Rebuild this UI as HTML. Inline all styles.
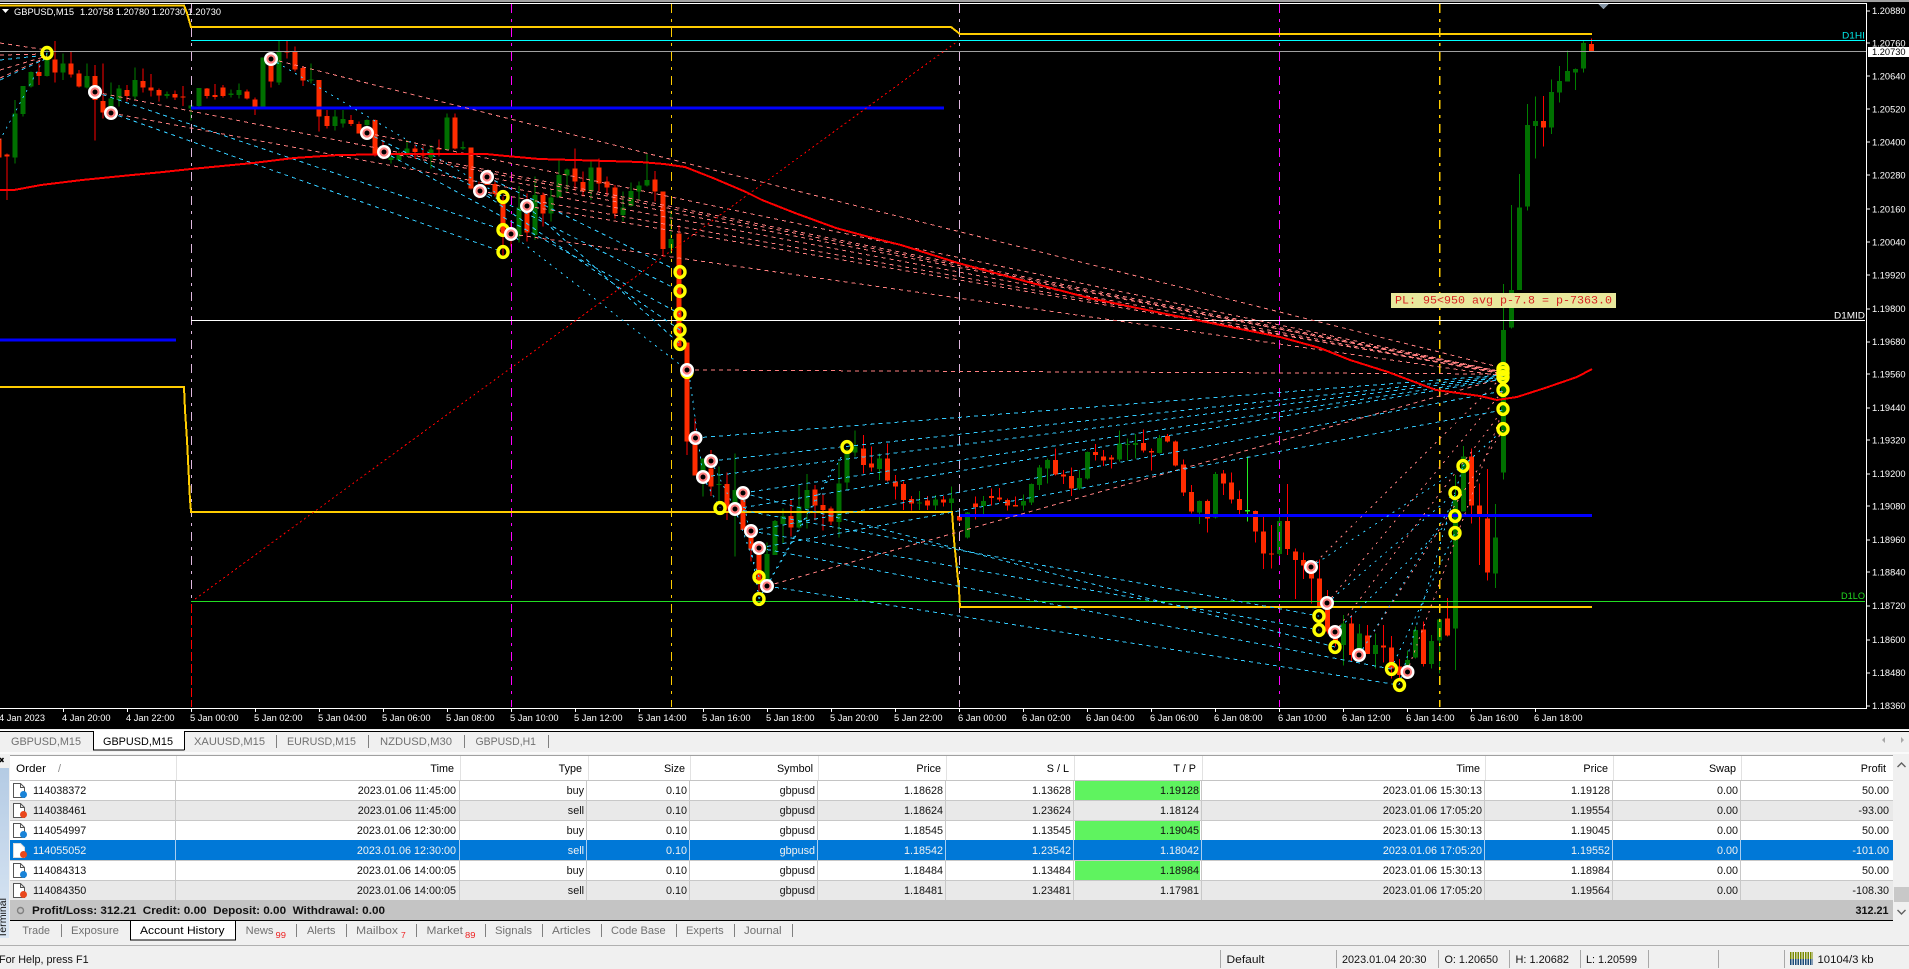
<!DOCTYPE html>
<html><head><meta charset="utf-8"><title>GBPUSD,M15</title>
<style>
html,body{margin:0;padding:0;background:#000;overflow:hidden}
svg{display:block;font-family:"Liberation Sans",sans-serif}
.c{fill:#fff;font-size:9.3px}
.t{font-size:10.8px;fill:#111}
.e{text-anchor:end}
.s{fill:#f2f2f2}
.g{font-size:10.8px;fill:#707070}
.k{font-size:10.8px;fill:#000}
.r{font-size:8.5px;fill:#ee2020}
.l{stroke:#c8c8c8;stroke-width:1}
</style></head><body>
<svg xmlns="http://www.w3.org/2000/svg" width="1909" height="969" viewBox="0 0 1909 969">
<rect width="1909" height="969" fill="#000"/>
<rect width="1909" height="2" fill="#a0a0a0"/>
<g shape-rendering="crispEdges">
<path d="M0 3.5H1866.5V708.5H0" fill="none" stroke="#fff"/>
<!-- candles upper -->
<g transform="translate(191 0) scale(8.003 .33333)" fill="none">
<path vector-effect="non-scaling-stroke" stroke="#ff0000" stroke-width="1" d="M-23 460V600M-19 190V255M-17 123V248M-15 155V232M-14 210V262M-12 195V422M-11 190V355M-8 255V305M-6 205V278M-5 222V290M-4 265V305M-2 272V300M-1 258V318M2 264V296M3 252V298M4 255V292M7 268V298M8 292V345M10 160V262M12 120V175M13 140V215M14 198V258M16 240V395M17 330V385M20 345V378M21 365V400M23 358V470M24 418V478M28 435V475M29 440V475M31 418V470M33 340V448M35 442V568M36 545V595M37 510V555M38 540V590M39 590V770M40 660V740M42 580V725M44 578V680M48 445V572M49 515V590M51 475V575M52 530V590M53 555V655M58 513V605M59 575V770M61 675V1000M169 288V440M175 115V155"/>
<path vector-effect="non-scaling-stroke" stroke="#008000" stroke-width="1" d="M-22 300V490M-21 258V350M-20 215V262M-18 140V230M-16 160V240M-13 190V265M-10 248V320M-9 255V320M-7 202V300M-3 275V295M0 315V362M1 264V320M5 268V292M6 250V295M9 173V322M11 120V255M15 190V250M18 330V392M19 330V382M22 358V380M25 470V490M26 455V485M27 420V470M30 435V505M32 340V450M34 425V450M41 558V728M43 530V720M45 570V665M46 480V590M47 505V575M50 485V600M54 575V665M55 548V620M56 545V600M57 462V560M60 632V760M164 852V1080M165 615V985M166 522V870M167 312V632M168 290V475M170 238V402M171 198V308M172 152V245M173 205V270M174 122V218"/>
<path vector-effect="non-scaling-stroke" stroke="#ff2c00" stroke-width="5" d="M-24 415V473M-23 464V470M-19 216V228M-17 178V218M-15 190V224M-14 220V260M-12 228V300M-11 303V338M-8 270V288M-6 243V262M-5 262V272M-4 270V287M-2 282V293M-1 289V293M2 265V288M3 285V291M4 262V288M7 274V296M8 298V322M10 180V245M12 154V158M13 155V208M14 204V242M16 240V350M17 348V378M20 360V372M21 372V400M23 360V460M24 440V475M28 445V456M29 460V466M31 444V448M33 352V445M35 442V566M36 560V590M37 510V555M38 552V582M39 600V700M40 685V720M42 630V698M44 585V640M48 505V545M49 546V575M51 502V550M52 545V562M53 562V640M58 538V575M59 575V747M61 700V1040M169 363V382M175 132V154"/>
<path vector-effect="non-scaling-stroke" stroke="#007000" stroke-width="5" d="M-22 340V473M-21 258V342M-20 216V260M-18 175V228M-16 190V218M-13 228V262M-10 296V320M-9 266V300M-7 240V290M-3 282V288M0 316V326M1 264V318M5 280V285M6 270V285M9 173V322M11 155V248M15 238V242M18 350V378M19 357V370M22 360V375M25 473V480M26 462V480M27 445V460M30 448V472M32 352V448M34 441V446M41 622V710M43 585V705M45 592V640M46 525V592M47 508V527M50 502V575M54 622V645M55 573V618M56 556V575M57 540V557M60 717V744M164 990V1080M165 870V983M166 622V870M167 375V620M168 363V378M170 276V383M171 243V278M172 213V245M173 207V218M174 129V206"/>
</g>
<!-- candles lower -->
<g transform="translate(191 360) scale(8.003 .33333)" fill="none">
<path vector-effect="non-scaling-stroke" stroke="#ff0000" stroke-width="1" d="M62 -53V285M63 175V345M65 270V408M67 338V480M69 395V510M70 500V605M71 560V695M75 418V530M78 375V482M79 402V512M80 440V495M84 225V340M85 260V335M87 250V365M88 345V418M89 365V450M90 408V452M92 408V450M94 408V440M96 465V485M98 410V478M100 385V436M101 384V425M102 415V452M103 410V440M108 265V347M109 330V372M110 322V408M113 252V302M114 270V318M115 285V325M119 208V277M120 265V332M122 222V248M123 242V320M124 298V408M125 375V460M127 418V518M129 330V405M130 338V430M131 392V462M133 452V548M134 470V627M135 495V625M137 372V585M138 565V717M139 577V657M140 610V730M141 598V740M142 690V820M143 795V860M145 765V905M147 795V880M149 795V908M150 828V955M151 897V960M154 785V920M157 714V830M160 265V490M161 370V615M162 327V662"/>
<path vector-effect="non-scaling-stroke" stroke="#008000" stroke-width="1" d="M64 295V410M66 320V430M68 280V590M72 548V670M73 480V585M74 445V550M76 375V505M77 342V505M81 305V532M82 265V390M83 212V290M86 280V360M91 393V450M93 405V450M95 380V455M97 456V535M99 408V462M104 403V452M105 370V435M106 315V390M107 295V370M111 330V390M112 275V358M116 212V305M117 235V302M118 222V295M121 225V280M126 422V492M128 336V475M136 455V590M144 765V917M146 792V870M148 820V925M152 872V920M153 800V895M155 825V925M156 775V940M158 345V930M159 258V455M163 432V684M164 0V358"/>
<path vector-effect="non-scaling-stroke" stroke="#ff2c00" stroke-width="5" d="M62 -53V245M63 250V347M65 325V380M67 372V445M69 420V510M70 500V570M71 570V665M75 468V502M78 388V437M79 435V450M80 445V485M84 265V315M85 310V323M87 295V362M88 365V380M89 372V420M90 417V430M92 421V437M94 418V428M96 468V482M98 431V441M100 408V414M101 412V419M102 420V436M103 435V439M108 300V344M109 343V350M110 348V386M113 276V285M114 289V302M115 293V299M119 249V272M120 273V277M122 228V245M123 244V317M124 313V398M125 396V455M127 423V475M129 340V370M130 367V418M131 417V450M133 453V515M134 514V580M135 580V584M137 483V567M138 574V600M139 600V616M140 620V656M141 655V740M142 720V815M143 810V845M145 790V885M147 826V882M149 856V862M150 862V925M151 920V945M154 808V912M157 775V827M160 290V436M161 436V465M162 475V638"/>
<path vector-effect="non-scaling-stroke" stroke="#007000" stroke-width="5" d="M64 295V360M66 372V375M68 390V440M72 582V665M73 483V585M74 468V492M76 440V502M77 390V445M81 370V486M82 280V368M83 260V278M86 295V327M91 427V431M93 418V437M95 415V429M97 458V533M99 423V438M104 423V437M105 372V428M106 323V375M107 300V326M111 354V385M112 276V356M116 250V298M117 252V255M118 249V255M121 234V279M126 423V457M128 342V472M136 483V582M144 790V855M146 820V870M148 855V882M152 900V920M153 810V893M155 843V912M156 778V842M158 420V805M159 290V455M163 532V640M164 0V338"/>
<path vector-effect="non-scaling-stroke" stroke="#22ee22" stroke-width="1" d="M132 290V485"/>
<path vector-effect="non-scaling-stroke" stroke="#22ee22" stroke-width="5" d="M132 450V454"/>
</g>
<!-- vertical lines -->
<g fill="none" stroke-width="1" stroke-dasharray="9 6 3 6">
<path stroke="#e0b8e0" d="M191.5 4V602M959.5 4V707"/>
<path stroke="#ff00ff" d="M511.5 4V707M1279.5 4V707"/>
<path stroke="#ffcc00" d="M671.5 4V707"/>
<path stroke="#ffcc00" d="M1439.5 4V707" stroke-width="1.5"/>
</g>
<path stroke="#ff0000" fill="none" stroke-dasharray="9 3" d="M191.5 604V707"/>
<!-- horizontals -->
<path d="M191 40.5H1865" stroke="#00ffff" fill="none"/>
<path d="M0 51.5H1866" stroke="#a0a0a0" fill="none"/>
<path d="M191 320.5H1865" stroke="#fff" fill="none"/>
<path d="M191 601.5H1865" stroke="#22dd22" fill="none"/>
<path d="M191 108H944M0 340H176M960 515.5H1592" stroke="#0000ff" stroke-width="3" fill="none"/>
<path d="M0 5.5H184L187 13L191 27H951L960 34H1592M0 387H184L185 410L187 440L189 480L190 500L191 512H952L954 540L957 570L959 590L960 607H1592" stroke="#ffcc00" stroke-width="2" fill="none"/>
<!-- dashed -->
<path fill="none" stroke="#ff8080" stroke-dasharray="4 4" d="M95 92L1503 372M111 113L1503 374M271 59L1503 368M367 133L1503 372M384 152L1503 373M487 177L1503 372M480 191L1503 374M527 206L1503 373M511 234L1503 376M687 370L1503 374M767 586L1503 378M0 43L47 50M0 55L47 54M0 70L47 56M0 78L47 57"/>
<path fill="none" stroke="#ff8080" stroke-dasharray="2 5" d="M1311 567L1503 376M1327 603L1503 391M1335 632L1503 410M1359 655L1503 430M1407 672L1503 410"/>
<path fill="none" stroke="#33ccff" stroke-dasharray="4 4" d="M0 60L47 55M0 80L47 58M95 92L503 230M111 113L503 252M367 133L680 291M384 152L680 314M487 177L680 272M480 191L680 330M527 206L680 344M695 438L1503 375M711 461L1503 376M703 477L1503 377M743 493L1503 378M735 509L1503 379M751 531L1503 391M759 548L1503 410M735 509L1319 616M751 531L1319 630M743 493L1335 647M759 548L1391 669M767 586L1399 685"/>
<path fill="none" stroke="#33ccff" stroke-dasharray="2 5" d="M47 53L0 140M271 59L503 197M511 234L687 370M690 380L703 477M703 477L720 508M735 509L759 577M711 461L735 509M743 493L759 599M767 586L847 447M759 599L835 465M1311 567L1463 466M1327 603L1455 493M1335 632L1455 516M1391 669L1455 533M1399 685L1463 466M1359 655L1455 500M1463 466L1503 430"/>
<path fill="none" stroke="#ff0000" stroke-dasharray="2 3" d="M195 599L958 41"/>
<!-- MA -->
<path fill="none" stroke="#ff0000" stroke-width="2" d="M0 190L14 190L41 185L82 180L122 176L163 172L191 169L253 163L294 158L339 155L408 154L486 154L506 156L539 159L608 161L640 162L664 164L685 167L713 178L746 192L762 200L795 213L836 228L869 237L901 245L958 263L1032 283L1089 298L1171 315L1280 337L1320 348L1350 360L1388 372L1436 390L1480 396L1497 400L1517 397L1545 388L1577 377L1592 369"/>
</g>
<!-- yellow rings -->
<g fill="none" stroke="#ffff00" stroke-width="3.4">
<ellipse cx="47" cy="53" rx="5" ry="5.5"/><ellipse cx="503" cy="197" rx="5" ry="5.4"/><ellipse cx="503" cy="230" rx="5" ry="5.4"/><ellipse cx="503" cy="252" rx="5" ry="5.4"/>
<ellipse cx="680" cy="272" rx="5" ry="5.4"/><ellipse cx="680" cy="291" rx="5" ry="5.4"/><ellipse cx="680" cy="314" rx="5" ry="5.4"/><ellipse cx="680" cy="330" rx="5" ry="5.4"/><ellipse cx="680" cy="344" rx="5" ry="5.4"/>
<ellipse cx="687" cy="372" rx="5" ry="5.4"/><ellipse cx="720" cy="508" rx="5" ry="5.4"/><ellipse cx="759" cy="577" rx="5" ry="5.4"/><ellipse cx="759" cy="599" rx="5" ry="5.4"/><ellipse cx="847" cy="447" rx="5" ry="5.4"/>
<ellipse cx="1319" cy="616" rx="5" ry="5.4"/><ellipse cx="1319" cy="630" rx="5" ry="5.4"/><ellipse cx="1335" cy="647" rx="5" ry="5.4"/><ellipse cx="1391.5" cy="669" rx="5" ry="5.4"/><ellipse cx="1399.5" cy="685" rx="5" ry="5.4"/>
<ellipse cx="1455" cy="493" rx="5" ry="5.4"/><ellipse cx="1455" cy="516" rx="5" ry="5.4"/><ellipse cx="1455" cy="533" rx="5" ry="5.4"/><ellipse cx="1463" cy="466" rx="5" ry="5.4"/>
<ellipse cx="1503" cy="369" rx="5" ry="5.4"/><ellipse cx="1503" cy="373" rx="5" ry="5.4"/><ellipse cx="1503" cy="377" rx="5" ry="5.4"/><ellipse cx="1503" cy="390" rx="5" ry="5.4"/><ellipse cx="1503" cy="409" rx="5" ry="5.4"/><ellipse cx="1503" cy="429" rx="5" ry="5.4"/>
</g>
<!-- white/pink rings -->
<g fill="#ff8080" stroke="#fff" stroke-width="2.4">
<circle cx="95" cy="92" r="5.8"/><circle cx="111" cy="113" r="5.8"/><circle cx="271" cy="59" r="5.8"/><circle cx="367" cy="133" r="5.8"/><circle cx="384" cy="152" r="5.8"/><circle cx="487" cy="177" r="5.8"/><circle cx="480" cy="191" r="5.8"/><circle cx="527" cy="206" r="5.8"/><circle cx="511" cy="234" r="5.8"/>
<circle cx="687" cy="370" r="5.8"/><circle cx="695.5" cy="438" r="5.8"/><circle cx="711" cy="461" r="5.8"/><circle cx="703" cy="477" r="5.8"/><circle cx="743" cy="493" r="5.8"/><circle cx="735" cy="509" r="5.8"/><circle cx="751" cy="531" r="5.8"/><circle cx="759" cy="548" r="5.8"/><circle cx="767" cy="586" r="5.8"/>
<circle cx="1311" cy="567" r="5.8"/><circle cx="1327" cy="603" r="5.8"/><circle cx="1335" cy="632" r="5.8"/><circle cx="1359" cy="655" r="5.8"/><circle cx="1407.5" cy="672" r="5.8"/>
</g>
<g fill="#000">
<circle cx="95" cy="92" r="2.5"/><circle cx="111" cy="113" r="2.5"/><circle cx="271" cy="59" r="2.5"/><circle cx="367" cy="133" r="2.5"/><circle cx="384" cy="152" r="2.5"/><circle cx="487" cy="177" r="2.5"/><circle cx="480" cy="191" r="2.5"/><circle cx="527" cy="206" r="2.5"/><circle cx="511" cy="234" r="2.5"/>
<circle cx="687" cy="370" r="2.5"/><circle cx="695.5" cy="438" r="2.5"/><circle cx="711" cy="461" r="2.5"/><circle cx="703" cy="477" r="2.5"/><circle cx="743" cy="493" r="2.5"/><circle cx="735" cy="509" r="2.5"/><circle cx="751" cy="531" r="2.5"/><circle cx="759" cy="548" r="2.5"/><circle cx="767" cy="586" r="2.5"/>
<circle cx="1311" cy="567" r="2.5"/><circle cx="1327" cy="603" r="2.5"/><circle cx="1335" cy="632" r="2.5"/><circle cx="1359" cy="655" r="2.5"/><circle cx="1407.5" cy="672" r="2.5"/>
</g>
<g shape-rendering="crispEdges">
<!-- right axis ticks, bottom ticks -->
<path fill="none" stroke="#fff" d="M1866 11H1870M1866 43H1870M1866 76H1870M1866 109H1870M1866 142H1870M1866 175H1870M1866 209H1870M1866 242H1870M1866 275H1870M1866 309H1870M1866 342H1870M1866 374H1870M1866 408H1870M1866 440H1870M1866 474H1870M1866 506H1870M1866 540H1870M1866 572H1870M1866 606H1870M1866 640H1870M1866 673H1870M1866 706H1870M63.5 708V712M127.5 708V712M191.5 708V712M255.5 708V712M319.5 708V712M383.5 708V712M447.5 708V712M511.5 708V712M575.5 708V712M639.5 708V712M703.5 708V712M767.5 708V712M831.5 708V712M895.5 708V712M959.5 708V712M1023.5 708V712M1087.5 708V712M1151.5 708V712M1215.5 708V712M1279.5 708V712M1343.5 708V712M1407.5 708V712M1471.5 708V712M1535.5 708V712"/>
<path d="M1598 4H1609L1603.5 9Z" fill="#8898a8"/>
<rect x="1868" y="47" width="41" height="10" fill="#fff"/>
<rect x="1391" y="293" width="225" height="15" fill="#e8e89c"/>
</g>
<!-- chart text -->
<path d="M2 9H9L5.5 13Z" fill="#fff"/>
<text class="c" x="14" y="15" textLength="60" lengthAdjust="spacingAndGlyphs">GBPUSD,M15</text>
<text class="c" x="80" y="15" textLength="141" lengthAdjust="spacingAndGlyphs">1.20758 1.20780 1.20730 1.20730</text>
<g class="c">
<text class="c" x="1872" y="14">1.20880</text><text class="c" x="1872" y="46.5">1.20760</text><text class="c" x="1872" y="79.5">1.20640</text><text class="c" x="1872" y="112.5">1.20520</text><text class="c" x="1872" y="145.5">1.20400</text><text class="c" x="1872" y="178.5">1.20280</text><text class="c" x="1872" y="212.5">1.20160</text><text class="c" x="1872" y="245.5">1.20040</text><text class="c" x="1872" y="278.5">1.19920</text><text class="c" x="1872" y="312">1.19800</text><text class="c" x="1872" y="345">1.19680</text><text class="c" x="1872" y="377.5">1.19560</text><text class="c" x="1872" y="411">1.19440</text><text class="c" x="1872" y="443.5">1.19320</text><text class="c" x="1872" y="477">1.19200</text><text class="c" x="1872" y="509.5">1.19080</text><text class="c" x="1872" y="543">1.18960</text><text class="c" x="1872" y="575.5">1.18840</text><text class="c" x="1872" y="609">1.18720</text><text class="c" x="1872" y="643">1.18600</text><text class="c" x="1872" y="676">1.18480</text><text class="c" x="1872" y="709">1.18360</text>
</g>
<text x="1872" y="55" style="font-size:9.3px;fill:#000">1.20730</text>
<text x="1842" y="38.5" textLength="23" lengthAdjust="spacingAndGlyphs" style="font-size:9.5px;fill:#00e8e8">D1HI</text>
<text x="1834" y="318.5" textLength="31" lengthAdjust="spacingAndGlyphs" style="font-size:9.5px;fill:#fff">D1MID</text>
<text x="1841" y="599" textLength="24" lengthAdjust="spacingAndGlyphs" style="font-size:9.5px;fill:#22dd22">D1LO</text>
<text x="1395" y="303.5" textLength="217" lengthAdjust="spacingAndGlyphs" style="font-family:'Liberation Mono',monospace;font-size:11px;fill:#d62020">PL: 95&lt;950 avg p-7.8 = p-7363.0</text>
<g>
<text class="c" x="-1" y="721">4 Jan 2023</text><text class="c" x="62" y="721">4 Jan 20:00</text><text class="c" x="126" y="721">4 Jan 22:00</text><text class="c" x="190" y="721">5 Jan 00:00</text><text class="c" x="254" y="721">5 Jan 02:00</text><text class="c" x="318" y="721">5 Jan 04:00</text><text class="c" x="382" y="721">5 Jan 06:00</text><text class="c" x="446" y="721">5 Jan 08:00</text><text class="c" x="510" y="721">5 Jan 10:00</text><text class="c" x="574" y="721">5 Jan 12:00</text><text class="c" x="638" y="721">5 Jan 14:00</text><text class="c" x="702" y="721">5 Jan 16:00</text><text class="c" x="766" y="721">5 Jan 18:00</text><text class="c" x="830" y="721">5 Jan 20:00</text><text class="c" x="894" y="721">5 Jan 22:00</text><text class="c" x="958" y="721">6 Jan 00:00</text><text class="c" x="1022" y="721">6 Jan 02:00</text><text class="c" x="1086" y="721">6 Jan 04:00</text><text class="c" x="1150" y="721">6 Jan 06:00</text><text class="c" x="1214" y="721">6 Jan 08:00</text><text class="c" x="1278" y="721">6 Jan 10:00</text><text class="c" x="1342" y="721">6 Jan 12:00</text><text class="c" x="1406" y="721">6 Jan 14:00</text><text class="c" x="1470" y="721">6 Jan 16:00</text><text class="c" x="1534" y="721">6 Jan 18:00</text>
</g>
<!-- lower panels -->
<g shape-rendering="crispEdges">
<rect y="729" width="1909" height="240" fill="#f0f0f0"/>
<rect y="730" width="1909" height="1" fill="#fff"/>
<rect y="731" width="1909" height="1" fill="#000"/>
<rect y="752" width="1909" height="2" fill="#fafafa"/>
<!-- chart tabs -->
<rect x="93" y="731" width="91" height="19" fill="#fff"/>
<path d="M93.5 731V750H184.5M184.5 750V731" fill="none" stroke="#000"/>
<path d="M276.5 735V748M368.5 735V748M464.5 735V748M548.5 735V748" stroke="#808080"/>
<!-- table -->
<rect x="10" y="755" width="1883" height="165" fill="#fff"/>
<rect x="10" y="755" width="1883" height="1" fill="#a0a0a0"/>
<rect x="10" y="780" width="1883" height="1" fill="#c4c4c4"/>
<rect x="10" y="800" width="1883" height="20" fill="#e9e9e9"/>
<rect x="10" y="840" width="1883" height="20" fill="#0078d7"/>
<rect x="10" y="880" width="1883" height="20" fill="#e9e9e9"/>
<rect x="1075" y="781" width="125" height="19" fill="#5ff35f"/>
<rect x="1075" y="821" width="125" height="19" fill="#5ff35f"/>
<rect x="1075" y="861" width="125" height="19" fill="#5ff35f"/>
<path class="l" d="M10 800.5H1893M10 820.5H1893M10 860.5H1893M10 880.5H1893" fill="none"/>
<path d="M176.5 756V780M460.5 756V780M588.5 756V780M690.5 756V780M818.5 756V780M946.5 756V780M1074.5 756V780M1202.5 756V780M1485.5 756V780M1613.5 756V780M1741.5 756V780" stroke="#e2e2e2" fill="none"/>
<path class="l" fill="none" d="M175.5 781V840M459.5 781V840M586.5 781V840M689.5 781V840M817.5 781V840M945.5 781V840M1073.5 781V840M1201.5 781V840M1484.5 781V840M1612.5 781V840M1740.5 781V840M175.5 860V900M459.5 860V900M586.5 860V900M689.5 860V900M817.5 860V900M945.5 860V900M1073.5 860V900M1201.5 860V900M1484.5 860V900M1612.5 860V900M1740.5 860V900"/>
<path fill="none" stroke="#a8cdf0" d="M175.5 840V860M459.5 840V860M586.5 840V860M689.5 840V860M817.5 840V860M945.5 840V860M1073.5 840V860M1201.5 840V860M1484.5 840V860M1612.5 840V860M1740.5 840V860"/>
<rect x="10" y="900" width="1883" height="20" fill="#c4c4c4"/>
<rect x="10" y="920" width="1883" height="1" fill="#000"/>
<!-- scrollbar -->
<rect x="1894" y="887" width="15" height="15" fill="#c8c8c8"/>
<!-- bottom tabs -->
<rect x="130" y="921" width="105" height="19" fill="#fff"/>
<path d="M130.5 921V940H235.5V921" fill="none" stroke="#000"/>
<path d="M61.5 924V937M296.5 924V937M346.5 924V937M416.5 924V937M485.5 924V937M542.5 924V937M601.5 924V937M676.5 924V937M734.5 924V937M792.5 924V937" stroke="#808080"/>
<rect y="945" width="1909" height="1" fill="#b0b0b0"/>
<path d="M1220.5 950V968M1336.5 950V968M1438.5 950V968M1509.5 950V968M1580.5 950V968M1648.5 950V968M1718.5 950V968M1784.5 950V968" stroke="#a8a8a8"/>
<path d="M1790 957H1813" stroke="#7a8a00" stroke-width="10" stroke-dasharray="1.5 1" fill="none"/>
<path d="M1790 962H1813" stroke="#1b4a78" stroke-width="6" stroke-dasharray="1.5 1" fill="none"/>
</g>
<defs><linearGradient id="tb" x1="0" y1="0" x2="0" y2="1"><stop offset="0" stop-color="#b4cbe4"/><stop offset="1" stop-color="#dbe7f4"/></linearGradient></defs>
<rect x="0" y="768" width="9" height="170" fill="url(#tb)"/>
<text transform="translate(6 938) rotate(-90)" textLength="40" lengthAdjust="spacingAndGlyphs" style="font-size:10.5px;fill:#111">Terminal</text>
<path d="M0 758L3.5 762M3.5 758L0 762" stroke="#000" stroke-width="1.4"/>
<!-- tab labels -->
<text class="g" x="11" y="745" textLength="70" lengthAdjust="spacingAndGlyphs">GBPUSD,M15</text>
<text class="k" x="103" y="745" textLength="70" lengthAdjust="spacingAndGlyphs">GBPUSD,M15</text>
<text class="g" x="194" y="745" textLength="71" lengthAdjust="spacingAndGlyphs">XAUUSD,M15</text>
<text class="g" x="287" y="745" textLength="69" lengthAdjust="spacingAndGlyphs">EURUSD,M15</text>
<text class="g" x="380" y="745" textLength="72" lengthAdjust="spacingAndGlyphs">NZDUSD,M30</text>
<text class="g" x="475.5" y="745" textLength="60.5" lengthAdjust="spacingAndGlyphs">GBPUSD,H1</text>
<path d="M1885 737V743L1882 740ZM1901 737V743L1904 740Z" fill="#a8a8a8"/>
<!-- header -->
<text class="k" x="16" y="772" textLength="30" lengthAdjust="spacingAndGlyphs">Order</text>
<text class="k" x="58" y="772" style="fill:#888">/</text>
<g class="k" style="text-anchor:end">
<text x="454" y="772">Time</text><text x="582" y="772">Type</text><text x="685" y="772">Size</text><text x="813" y="772">Symbol</text><text x="941" y="772">Price</text><text x="1069" y="772">S / L</text><text x="1196" y="772">T / P</text><text x="1480" y="772">Time</text><text x="1608" y="772">Price</text><text x="1736" y="772">Swap</text><text x="1886" y="772">Profit</text>
</g>
<!-- rows -->
<g class="t">
<text x="33" y="794">114038372</text><text x="33" y="814">114038461</text><text x="33" y="834">114054997</text><text x="33" y="854" style="fill:#f2f2f2">114055052</text><text x="33" y="874">114084313</text><text x="33" y="894">114084350</text>
</g>
<g class="t e" style="text-anchor:end">
<text x="456" y="794">2023.01.06 11:45:00</text><text x="584" y="794">buy</text><text x="687" y="794">0.10</text><text x="815" y="794">gbpusd</text><text x="943" y="794">1.18628</text><text x="1071" y="794">1.13628</text><text x="1199" y="794">1.19128</text><text x="1482" y="794">2023.01.06 15:30:13</text><text x="1610" y="794">1.19128</text><text x="1738" y="794">0.00</text><text x="1889" y="794">50.00</text>
<text x="456" y="814">2023.01.06 11:45:00</text><text x="584" y="814">sell</text><text x="687" y="814">0.10</text><text x="815" y="814">gbpusd</text><text x="943" y="814">1.18624</text><text x="1071" y="814">1.23624</text><text x="1199" y="814">1.18124</text><text x="1482" y="814">2023.01.06 17:05:20</text><text x="1610" y="814">1.19554</text><text x="1738" y="814">0.00</text><text x="1889" y="814">-93.00</text>
<text x="456" y="834">2023.01.06 12:30:00</text><text x="584" y="834">buy</text><text x="687" y="834">0.10</text><text x="815" y="834">gbpusd</text><text x="943" y="834">1.18545</text><text x="1071" y="834">1.13545</text><text x="1199" y="834">1.19045</text><text x="1482" y="834">2023.01.06 15:30:13</text><text x="1610" y="834">1.19045</text><text x="1738" y="834">0.00</text><text x="1889" y="834">50.00</text>
<g style="fill:#f2f2f2"><text x="456" y="854">2023.01.06 12:30:00</text><text x="584" y="854">sell</text><text x="687" y="854">0.10</text><text x="815" y="854">gbpusd</text><text x="943" y="854">1.18542</text><text x="1071" y="854">1.23542</text><text x="1199" y="854">1.18042</text><text x="1482" y="854">2023.01.06 17:05:20</text><text x="1610" y="854">1.19552</text><text x="1738" y="854">0.00</text><text x="1889" y="854">-101.00</text></g>
<text x="456" y="874">2023.01.06 14:00:05</text><text x="584" y="874">buy</text><text x="687" y="874">0.10</text><text x="815" y="874">gbpusd</text><text x="943" y="874">1.18484</text><text x="1071" y="874">1.13484</text><text x="1199" y="874">1.18984</text><text x="1482" y="874">2023.01.06 15:30:13</text><text x="1610" y="874">1.18984</text><text x="1738" y="874">0.00</text><text x="1889" y="874">50.00</text>
<text x="456" y="894">2023.01.06 14:00:05</text><text x="584" y="894">sell</text><text x="687" y="894">0.10</text><text x="815" y="894">gbpusd</text><text x="943" y="894">1.18481</text><text x="1071" y="894">1.23481</text><text x="1199" y="894">1.17981</text><text x="1482" y="894">2023.01.06 17:05:20</text><text x="1610" y="894">1.19564</text><text x="1738" y="894">0.00</text><text x="1889" y="894">-108.30</text>
</g>
<!-- doc icons -->
<g fill="#fff" stroke="#555" stroke-width="1">
<path d="M13.5 783.5H20.5L24.5 787.5V797.5H13.5ZM20.5 783.5V787.5H24.5"/><path d="M13.5 803.5H20.5L24.5 807.5V817.5H13.5ZM20.5 803.5V807.5H24.5"/><path d="M13.5 823.5H20.5L24.5 827.5V837.5H13.5ZM20.5 823.5V827.5H24.5"/><path d="M13.5 843.5H20.5L24.5 847.5V857.5H13.5Z" stroke="#ddd"/><path d="M13.5 863.5H20.5L24.5 867.5V877.5H13.5ZM20.5 863.5V867.5H24.5"/><path d="M13.5 883.5H20.5L24.5 887.5V897.5H13.5ZM20.5 883.5V887.5H24.5"/>
</g>
<g>
<circle cx="23.5" cy="794.5" r="3.5" fill="#1a84d8"/><circle cx="23.5" cy="814.5" r="3.5" fill="#e8481c"/><circle cx="23.5" cy="834.5" r="3.5" fill="#1a84d8"/><circle cx="23.5" cy="854.5" r="3.5" fill="#e8481c"/><circle cx="23.5" cy="874.5" r="3.5" fill="#1a84d8"/><circle cx="23.5" cy="894.5" r="3.5" fill="#e8481c"/>
</g>
<!-- summary -->
<circle cx="20.5" cy="910.5" r="3" fill="#c4c4c4" stroke="#808080" stroke-width="1.4"/>
<text x="32" y="914" textLength="353" lengthAdjust="spacingAndGlyphs" style="font-size:10.8px;font-weight:bold;fill:#111;white-space:pre">Profit/Loss: 312.21  Credit: 0.00  Deposit: 0.00  Withdrawal: 0.00</text>
<text x="1888.5" y="914" text-anchor="end" style="font-size:10.8px;font-weight:bold;fill:#111">312.21</text>
<path d="M1897.5 767L1901.5 763L1905.5 767M1897.5 910L1901.5 914L1905.5 910" fill="none" stroke="#606060" stroke-width="1.4"/>
<!-- bottom tabs text -->
<text class="g" x="22.4" y="934" textLength="27.6" lengthAdjust="spacingAndGlyphs">Trade</text>
<text class="g" x="71" y="934" textLength="48" lengthAdjust="spacingAndGlyphs">Exposure</text>
<text class="k" x="140" y="934" textLength="84.5" lengthAdjust="spacingAndGlyphs">Account History</text>
<text class="g" x="245.7" y="934" textLength="27.8" lengthAdjust="spacingAndGlyphs">News</text>
<text class="r" x="275.5" y="938" textLength="10.5" lengthAdjust="spacingAndGlyphs">99</text>
<text class="g" x="307" y="934" textLength="28.5" lengthAdjust="spacingAndGlyphs">Alerts</text>
<text class="g" x="356" y="934" textLength="42" lengthAdjust="spacingAndGlyphs">Mailbox</text>
<text class="r" x="401" y="938">7</text>
<text class="g" x="426.5" y="934" textLength="36.5" lengthAdjust="spacingAndGlyphs">Market</text>
<text class="r" x="465" y="938" textLength="10.5" lengthAdjust="spacingAndGlyphs">89</text>
<text class="g" x="495" y="934" textLength="37" lengthAdjust="spacingAndGlyphs">Signals</text>
<text class="g" x="552" y="934" textLength="38.6" lengthAdjust="spacingAndGlyphs">Articles</text>
<text class="g" x="611" y="934" textLength="54.7" lengthAdjust="spacingAndGlyphs">Code Base</text>
<text class="g" x="686" y="934" textLength="37.7" lengthAdjust="spacingAndGlyphs">Experts</text>
<text class="g" x="744" y="934" textLength="37.6" lengthAdjust="spacingAndGlyphs">Journal</text>
<!-- status -->
<text class="t" x="-1" y="963" textLength="89.6" lengthAdjust="spacingAndGlyphs">For Help, press F1</text>
<text class="t" x="1226.5" y="963" textLength="38" lengthAdjust="spacingAndGlyphs">Default</text>
<text class="t" x="1342" y="963" textLength="84.4" lengthAdjust="spacingAndGlyphs">2023.01.04 20:30</text>
<text class="t" x="1444.5" y="963" textLength="53.5" lengthAdjust="spacingAndGlyphs">O: 1.20650</text>
<text class="t" x="1515.5" y="963" textLength="53.5" lengthAdjust="spacingAndGlyphs">H: 1.20682</text>
<text class="t" x="1586" y="963" textLength="51" lengthAdjust="spacingAndGlyphs">L: 1.20599</text>
<text class="t" x="1817.5" y="963" textLength="56" lengthAdjust="spacingAndGlyphs">10104/3 kb</text>
</svg>
</body></html>
